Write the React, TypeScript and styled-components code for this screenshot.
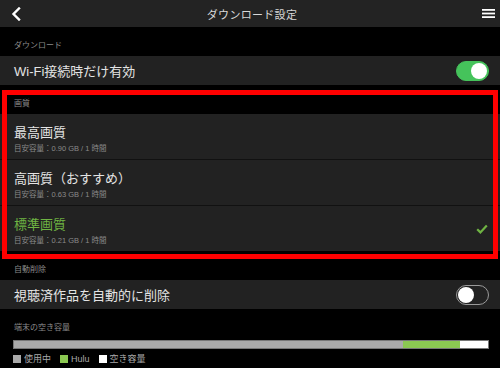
import React from "react";
import styled, { createGlobalStyle } from "styled-components";

const Global = createGlobalStyle`
  html, body { margin: 0; padding: 0; background: #000; }
  body { font-family: "Liberation Sans", "Noto Sans CJK JP", sans-serif; }
  * { box-sizing: border-box; }
`;

const Page = styled.div`
  position: relative;
  width: 500px;
  height: 368px;
  background: #000;
  overflow: hidden;
`;

const TopBar = styled.div`
  height: 27px;
  background: #232323;
  display: flex;
  align-items: center;
  justify-content: space-between;
  padding: 0 5px 0 9px;
`;

const Title = styled.div`
  color: #d8d8d8;
  font-size: 11px;
  letter-spacing: 0.3px;
`;

const IconSlot = styled.div`
  width: 14px;
  height: 16px;
  display: flex;
  align-items: center;
  justify-content: center;
`;

const SectionHeader = styled.div`
  height: 29px;
  display: flex;
  align-items: flex-end;
  padding: 0 14px 6px;
  color: #8a8a8a;
  font-size: 8px;
`;

const ToggleRow = styled.div`
  height: 29px;
  background: #222;
  display: flex;
  align-items: center;
  justify-content: space-between;
  padding: 0 11px 0 14px;
`;

const RowLabel = styled.div<{ $green?: boolean }>`
  color: ${(p) => (p.$green ? "#6fb443" : "#e4e4e4")};
  font-size: 13px;
`;

const Toggle = styled.div<{ $on?: boolean }>`
  width: 33px;
  height: 20px;
  border-radius: 10px;
  background: ${(p) => (p.$on ? "#45c35b" : "transparent")};
  border: 1px solid ${(p) => (p.$on ? "#45c35b" : "#9a9a9a")};
  display: flex;
  justify-content: ${(p) => (p.$on ? "flex-end" : "flex-start")};
  align-items: center;
  padding: 1px;
`;

const Knob = styled.div`
  width: 16px;
  height: 16px;
  border-radius: 50%;
  background: #fff;
`;

const QualityList = styled.div`
  display: flex;
  flex-direction: column;
  gap: 1px;
  background: #111;
`;

const QualityRow = styled.div`
  height: 45px;
  background: #222;
  display: flex;
  align-items: center;
  justify-content: space-between;
  padding: 0 12px 0 14px;
`;

const QualityText = styled.div`
  display: flex;
  flex-direction: column;
  gap: 1px;
  padding-top: 1px;
`;

const Sub = styled.div`
  color: #8a8a8a;
  font-size: 7.5px;
`;

const StorageBar = styled.div`
  margin: 2px 11px 0 13px;
  height: 9px;
  display: flex;
  border: 1px solid #777;
  background: #fff;
`;

const BarSeg = styled.div<{ $c: string }>`
  background: ${(p) => p.$c};
  height: 100%;
`;

const Legend = styled.div`
  display: flex;
  align-items: center;
  padding: 3px 13px 0;
  gap: 3px;
  color: #a8a8a8;
  font-size: 9px;
`;

const Swatch = styled.span<{ $first?: boolean; $c: string }>`
  width: 8px;
  height: 8px;
  background: ${(p) => p.$c};
  display: inline-block;
  margin-left: ${(p) => (p.$first ? 0 : 6)}px;
`;

const Highlight = styled.div`
  position: absolute;
  left: 2px;
  top: 90px;
  width: 496px;
  height: 169px;
  border: 5px solid #ff0000;
  pointer-events: none;
`;

const qualities = [
  { name: "最高画質", sub: "目安容量：0.90 GB / 1 時間", sel: false },
  { name: "高画質（おすすめ）", sub: "目安容量：0.63 GB / 1 時間", sel: false },
  { name: "標準画質", sub: "目安容量：0.21 GB / 1 時間", sel: true },
];

export default function App() {
  return (
    <Page>
      <Global />
      <TopBar>
        <IconSlot>
          <svg width="10" height="14" viewBox="0 0 10 14">
            <path d="M8 1.5 L2.5 7 L8 12.5" fill="none" stroke="#fff" strokeWidth="2.4" strokeLinecap="square" />
          </svg>
        </IconSlot>
        <Title>ダウンロード設定</Title>
        <IconSlot>
          <svg width="13" height="11" viewBox="0 0 13 11">
            <rect x="0" y="1" width="13" height="1.8" fill="#fff" />
            <rect x="0" y="4.6" width="13" height="1.8" fill="#fff" />
            <rect x="0" y="8.2" width="13" height="1.8" fill="#fff" />
          </svg>
        </IconSlot>
      </TopBar>

      <SectionHeader>ダウンロード</SectionHeader>
      <ToggleRow>
        <RowLabel>Wi-Fi接続時だけ有効</RowLabel>
        <Toggle $on>
          <Knob />
        </Toggle>
      </ToggleRow>

      <SectionHeader>画質</SectionHeader>
      <QualityList>
        {qualities.map((q) => (
          <QualityRow key={q.name}>
            <QualityText>
              <RowLabel $green={q.sel}>{q.name}</RowLabel>
              <Sub>{q.sub}</Sub>
            </QualityText>
            {q.sel && (
              <svg width="12" height="10" viewBox="0 0 12 10">
                <path d="M1.2 5.2 L4.4 8.4 L10.8 1.4" fill="none" stroke="#6fb443" strokeWidth="2.2" />
              </svg>
            )}
          </QualityRow>
        ))}
      </QualityList>

      <SectionHeader>自動削除</SectionHeader>
      <ToggleRow>
        <RowLabel>視聴済作品を自動的に削除</RowLabel>
        <Toggle>
          <Knob />
        </Toggle>
      </ToggleRow>

      <SectionHeader>端末の空き容量</SectionHeader>
      <StorageBar>
        <BarSeg $c="#aaa" style={{ width: "82%" }} />
        <BarSeg $c="#8bc852" style={{ width: "12.2%" }} />
      </StorageBar>
      <Legend>
        <Swatch $first $c="#aaa" />
        <span>使用中</span>
        <Swatch $c="#8bc852" />
        <span>Hulu</span>
        <Swatch $c="#fff" />
        <span>空き容量</span>
      </Legend>

      <Highlight />
    </Page>
  );
}
